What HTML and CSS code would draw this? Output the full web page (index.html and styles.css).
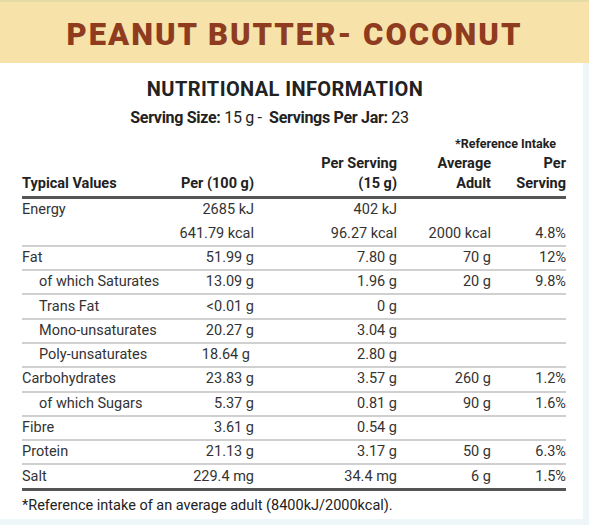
FILE: index.html
```html
<!DOCTYPE html>
<html lang="en">
<head>
    <meta charset="UTF-8" />
    <title>Peanut Butter - Coconut</title>
    <link rel="stylesheet" href="styles.css">
</head>
<body>

<header class="banner">
    <h1 class="product-name">PEANUT BUTTER- COCONUT</h1>
</header>

<main class="label-panel">
    <h2 class="label-title">NUTRITIONAL INFORMATION</h2>
    <p class="serving-info"><b>Serving Size:</b> 15 g - &nbsp;<b>Servings Per Jar:</b> 23</p>

    <table class="facts">
        <colgroup>
            <col class="col-name">
            <col class="col-100">
            <col class="col-serving">
            <col class="col-adult">
            <col class="col-ri">
        </colgroup>
        <thead>
            <tr class="ri-row">
                <th></th>
                <th></th>
                <th></th>
                <th colspan="2" class="ri-label">*Reference Intake</th>
            </tr>
            <tr class="head-row">
                <th class="name">Typical Values</th>
                <th>Per (100 g)</th>
                <th>Per Serving<br>(15 g)</th>
                <th>Average<br>Adult</th>
                <th>Per<br>Serving</th>
            </tr>
        </thead>
        <tbody>
            <tr class="no-line">
                <td class="name">Energy</td>
                <td>2685 kJ</td>
                <td>402 kJ</td>
                <td></td>
                <td></td>
            </tr>
            <tr>
                <td class="name"></td>
                <td>641.79 kcal</td>
                <td>96.27 kcal</td>
                <td>2000 kcal</td>
                <td>4.8%</td>
            </tr>
            <tr>
                <td class="name">Fat</td>
                <td>51.99 g</td>
                <td>7.80 g</td>
                <td>70 g</td>
                <td>12%</td>
            </tr>
            <tr>
                <td class="name sub">of which Saturates</td>
                <td>13.09 g</td>
                <td>1.96 g</td>
                <td>20 g</td>
                <td>9.8%</td>
            </tr>
            <tr>
                <td class="name sub">Trans Fat</td>
                <td>&lt;0.01 g</td>
                <td>0 g</td>
                <td></td>
                <td></td>
            </tr>
            <tr>
                <td class="name sub">Mono-unsaturates</td>
                <td>20.27 g</td>
                <td>3.04 g</td>
                <td></td>
                <td></td>
            </tr>
            <tr>
                <td class="name sub">Poly-unsaturates</td>
                <td class="nudge">18.64 g</td>
                <td>2.80 g</td>
                <td></td>
                <td></td>
            </tr>
            <tr>
                <td class="name">Carbohydrates</td>
                <td>23.83 g</td>
                <td>3.57 g</td>
                <td>260 g</td>
                <td>1.2%</td>
            </tr>
            <tr>
                <td class="name sub">of which Sugars</td>
                <td>5.37 g</td>
                <td>0.81 g</td>
                <td>90 g</td>
                <td>1.6%</td>
            </tr>
            <tr>
                <td class="name">Fibre</td>
                <td>3.61 g</td>
                <td>0.54 g</td>
                <td></td>
                <td></td>
            </tr>
            <tr>
                <td class="name">Protein</td>
                <td>21.13 g</td>
                <td>3.17 g</td>
                <td>50 g</td>
                <td>6.3%</td>
            </tr>
            <tr class="last">
                <td class="name">Salt</td>
                <td>229.4 mg</td>
                <td>34.4 mg</td>
                <td>6 g</td>
                <td>1.5%</td>
            </tr>
        </tbody>
    </table>

    <p class="footnote">*Reference intake of an average adult (8400kJ/2000kcal).</p>
</main>

</body>
</html>
```

FILE: styles.css
```css
body {
    margin: 0;
    padding: 0;
    background: #eef6fa;
    font-family: Roboto, "Liberation Sans", sans-serif;
    color: #333;
}

.banner {
    height: 61px;
    background: #f7e3a9;
    border-top: 2px solid #e4dca4;
    display: flex;
    align-items: center;
    justify-content: center;
}

.product-name {
    margin: 0;
    padding-top: 4px;
    font-size: 31px;
    font-weight: 900;
    letter-spacing: 2px;
    color: #8e3b1f;
}

.label-panel {
    width: 583px;
    height: 456px;
    background: #fff;
    padding: 14px 0 0 22px;
    box-sizing: border-box;
}

.label-title {
    margin: 0;
    width: 544px;
    padding-right: 18px;
    box-sizing: border-box;
    text-align: center;
    font-size: 20px;
    font-weight: 700;
    letter-spacing: 0.4px;
    color: #222;
    line-height: 24px;
}

.serving-info {
    margin: 6px 0 0;
    width: 544px;
    padding-right: 49px;
    box-sizing: border-box;
    text-align: center;
    font-size: 16px;
    letter-spacing: -0.3px;
    line-height: 22px;
    color: #222;
}

.serving-info b {
    font-weight: 700;
}

.facts {
    width: 544px;
    margin-top: 5px;
    border-collapse: collapse;
    table-layout: fixed;
    font-size: 14.5px;
}

.col-name { width: 152px; }
.col-100 { width: 80px; }
.col-serving { width: 143px; }
.col-adult { width: 94px; }
.col-ri { width: 75px; }

.facts th,
.facts td {
    padding: 0;
    text-align: right;
    white-space: nowrap;
}

.facts th {
    font-weight: 700;
    color: #222;
    line-height: 20px;
    vertical-align: bottom;
}

.facts .name {
    text-align: left;
}

.facts .sub {
    padding-left: 17px;
}

.ri-row th {
    height: 20px;
    vertical-align: middle;
}

.ri-label {
    font-size: 12.5px;
    padding-right: 10px !important;
}

.head-row th {
    padding-bottom: 2px;
    border-bottom: 3px solid #555;
}

.facts td {
    height: 22.3px;
    line-height: 22px;
    border-bottom: 2px solid #d0d0d0;
    color: #333;
}

.facts tr.no-line td {
    border-bottom: none;
    height: 23.5px;
    vertical-align: top;
}

.facts tr.last td {
    border-bottom: 3px solid #555;
}

.facts td.nudge {
    padding-right: 4px;
}

.footnote {
    margin: 6px 0 0;
    font-size: 14.5px;
    color: #222;
}
```
